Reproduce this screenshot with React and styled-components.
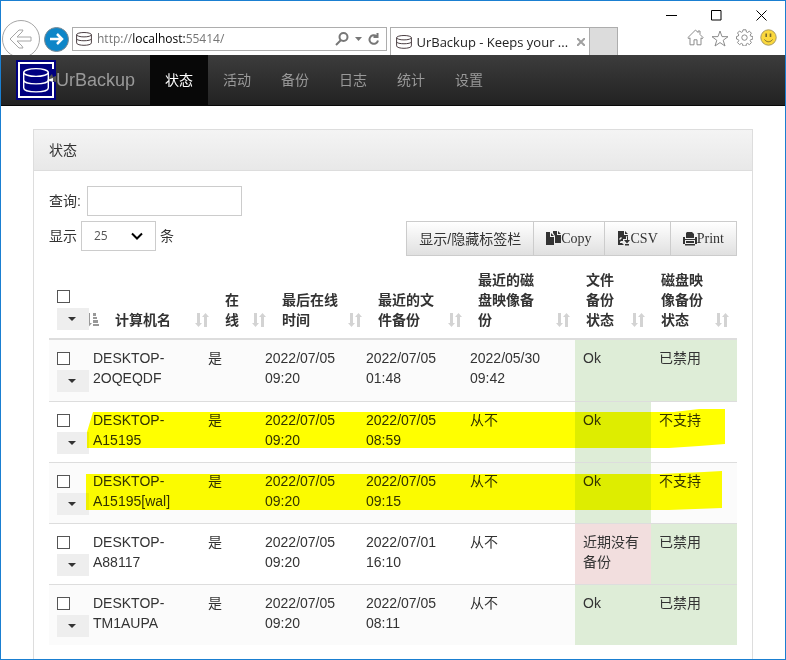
import React from "react";
import styled, { createGlobalStyle, css } from "styled-components";

const sans = '"Liberation Sans", "Noto Sans CJK SC", sans-serif';
const chromeFont = '"Open Sans", "Noto Sans CJK SC", sans-serif';
const serif = '"Liberation Serif", "Noto Sans CJK SC", serif';

const GlobalStyle = createGlobalStyle`
  *, *::before, *::after { box-sizing: border-box; }
  body {
    margin: 0;
    background: #fff;
    color: #333;
    font-family: ${sans};
    font-size: 14px;
    line-height: 20px;
  }
  button, input, select { font: inherit; color: inherit; margin: 0; }
`;

const Window = styled.div`
  display: flex;
  flex-direction: column;
  min-height: 100vh;
  border: 1px solid #1a7fd1;
`;

/* ---------- browser chrome ---------- */

const Chrome = styled.header`
  display: flex;
  align-items: flex-end;
  height: 54px;
  background: #fff;
  font-family: ${chromeFont};
  font-size: 13px;
  overflow: hidden;
`;

const IconButton = styled.button`
  display: flex;
  align-items: center;
  justify-content: center;
  width: ${(p) => p.$size || 16}px;
  height: ${(p) => p.$size || 16}px;
  padding: 0;
  border: 0;
  background: none;
  flex: none;
`;

const History = styled.div`
  display: flex;
  align-items: center;
  gap: 4px;
  height: 38px;
  margin: 0 3px -3px 1px;
`;

const RoundButton = styled(IconButton)`
  border-radius: 50%;
  border: 1px solid ${(p) => (p.$back ? "#a6a6a6" : "#7b8b95")};
  background: ${(p) => (p.$back ? "#fff" : "#0e86c8")};
`;

const AddressBar = styled.form`
  display: flex;
  align-items: center;
  flex: 320 1 0;
  min-width: 0;
  height: 24px;
  margin: 0 3px 4px 0;
  padding: 0 4px 0 3px;
  gap: 4px;
  border: 1px solid #adadad;
  color: #757575;
  font-size: 12px;
`;

const Address = styled.span`
  flex: 1;
  min-width: 0;
  padding-left: 1px;
  white-space: nowrap;
  overflow: hidden;

  b {
    font-weight: 400;
    color: #000;
  }
`;

const Tab = styled.div`
  display: flex;
  align-items: center;
  flex: 199 1 0;
  min-width: 0;
  height: 28px;
  padding: 0 2px 0 5px;
  gap: 4px;
  border: 1px solid #adadad;
  border-bottom: 0;
  color: #222;
`;

const TabTitle = styled.span`
  flex: 1;
  min-width: 0;
  white-space: nowrap;
  overflow: hidden;
`;

const NewTab = styled.button`
  width: 28px;
  height: 28px;
  flex: none;
  padding: 0;
  border: 1px solid #adadad;
  border-width: 1px 1px 0 0;
  background: #dcdcdc;
`;

const ChromeRight = styled.div`
  display: flex;
  flex-direction: column;
  justify-content: space-between;
  align-items: flex-end;
  flex: none;
  height: 54px;
  padding: 6px 8px 8px 45px;
`;

const WindowControls = styled.div`
  display: flex;
  gap: 29px;
  padding-right: 8px;
`;

const Tools = styled.div`
  display: flex;
  gap: 7px;
`;

/* ---------- application ---------- */

const Navbar = styled.nav`
  display: flex;
  height: 51px;
  padding-left: 15px;
  background: linear-gradient(#3c3c3c, #222);
  border-bottom: 1px solid #080808;
`;

const Brand = styled.a`
  display: flex;
  align-items: center;
  width: 134px;
  color: #999;
  font-size: 18px;
  text-decoration: none;
`;

const NavLink = styled.a`
  padding: 15px;
  color: ${(p) => (p.$active ? "#fff" : "#999")};
  background: ${(p) => (p.$active ? "#080808" : "none")};
  text-decoration: none;
`;

const Main = styled.main`
  display: flex;
  flex: 1;
  padding: 23px 32px 0;
`;

const Panel = styled.section`
  flex: 1;
  min-width: 0;
  border: 1px solid #ddd;
  border-bottom: 0;
`;

const PanelTitle = styled.h1`
  margin: 0;
  padding: 10px 15px;
  border-bottom: 1px solid #ddd;
  background: linear-gradient(#f4f4f4, #e8e8e8);
  font-size: 14px;
  font-weight: 400;
`;

const PanelBody = styled.div`
  padding: 15px 15px 12px;
`;

const Field = styled.label`
  display: flex;
  align-items: center;
  height: 30px;
  gap: ${(p) => p.$gap}px;
`;

const SearchInput = styled.input`
  width: 155px;
  height: 30px;
  padding: 4px 8px;
  border: 1px solid #ccc;
  background: #fff;
`;

const Toolbar = styled.div`
  display: flex;
  justify-content: space-between;
  margin: 5px 0 6px;
`;

const SelectBox = styled.span`
  position: relative;
  display: block;

  svg {
    position: absolute;
    top: 11px;
    right: 13px;
    pointer-events: none;
  }
`;

const LengthSelect = styled.select`
  appearance: none;
  width: 75px;
  height: 30px;
  padding: 4px 12px;
  border: 1px solid #ccc;
  border-radius: 0;
  background: #fff;
  color: #555;
  font-family: ${chromeFont};
  font-size: 12px;
`;

const ButtonGroup = styled.div`
  display: flex;
`;

const ToolButton = styled.button`
  display: flex;
  align-items: center;
  height: 35px;
  padding: 0 12px;
  border: 1px solid #ccc;
  background: linear-gradient(#fff, #e0e0e0);
  font-family: ${(p) => (p.$serif ? serif : sans)};

  & + & {
    margin-left: -1px;
  }
`;

const Table = styled.table`
  display: block;
  width: 100%;
`;

const Head = styled.thead`
  display: block;
  border-bottom: 2px solid #ddd;
`;

const Body = styled.tbody`
  display: block;
`;

const HeadRow = styled.tr`
  display: grid;
  grid-template-columns: 58fr 110fr 57fr 96fr 100fr 108fr 75fr 84fr;
`;

const HeadCell = styled.th`
  position: relative;
  display: flex;
  flex-direction: column;
  justify-content: flex-end;
  min-width: 0;
  padding: 8px ${(p) => (p.$selector ? 0 : 31)}px 8px 8px;
  text-align: left;
  font-weight: 700;
`;

const SortIcon = styled.svg`
  position: absolute;
  right: 8px;
  bottom: 11px;
`;

const Row = styled.tr`
  position: relative;
  display: grid;
  grid-template-columns: 36fr 115fr 57fr 101fr 104fr 113fr 76fr 86fr;
  min-height: 61px;

  &:nth-child(odd) {
    background: #fbfbfb;
  }
  & + & td {
    border-top: 1px solid #ddd;
  }
`;

const tones = { ok: "#deedd7", bad: "#f2dede" };

const Cell = styled.td`
  min-width: 0;
  padding: 8px 0 8px 8px;
  ${(p) => p.$narrow && css`padding-right: 20px;`}
  ${(p) => p.$tone && css`background: ${tones[p.$tone]};`}
`;

const Check = styled.input`
  appearance: none;
  display: block;
  width: 13px;
  height: 13px;
  border: 1px solid #555;
  background: #fff;

  ${Cell} &, ${HeadCell} & {
    margin: 4px 0 5px;
  }
  &:checked {
    background: #0e86c8;
  }
`;

const MenuButton = styled.button`
  position: relative;
  z-index: 1;
  display: flex;
  align-items: center;
  justify-content: center;
  width: 32px;
  height: 22px;
  padding: 0 2px 0 0;
  border: 0;
  background: #eee;
`;

const Marker = styled.svg`
  position: absolute;
  z-index: 2;
  left: 0;
  top: 0;
  width: 100%;
  height: 100%;
  mix-blend-mode: multiply;
  pointer-events: none;
`;

/* ---------- drawings ---------- */

const Disks = () => (
  <svg width="16" height="14" viewBox="0 0 16 14" fill="none" stroke="#4b3f43" aria-hidden="true">
    <ellipse cx="8" cy="2.7" rx="7.4" ry="2.2" />
    <path d="M.6 2.7v8.2c0 3.2 14.8 3.2 14.8 0V2.7M.6 6.8c0 2.6 14.8 2.6 14.8 0" />
  </svg>
);

const Logo = () => (
  <svg width="40" height="40" viewBox="0 0 40 40" fill="none" aria-hidden="true">
    <path fill="#000080" d="M0 0h40v40H0z" />
    <path stroke="#fff" strokeWidth="2" d="M37 9V3H3v34h34V22" />
    <g stroke="#fff" strokeWidth="1.4">
      <ellipse cx="20" cy="12.500" rx="12.300" ry="3.900" />
      <path d="M7.700 12.500v15.500c0 5.200 24.600 5.200 24.600 0V12.500M7.700 20c0 5.200 24.600 5.200 24.600 0" />
    </g>
    <path fill="#555" d="m33 17 3-3 1 3 3-1v6l-4-1-3 1z" />
    <path fill="#fff" d="m31 20 6-2v4z" />
  </svg>
);

const SortBoth = () => (
  <SortIcon width="14" height="14" viewBox="0 0 14 14" fill="#d3d3d3" aria-hidden="true">
    <path d="M2 0h3v10h2l-3.500 4L0 10h2zM9 14h3V4h2l-3.500-4L7 4h2z" />
  </SortIcon>
);

const SortAsc = () => (
  <SortIcon width="14" height="14" viewBox="0 0 14 14" fill="#999" aria-hidden="true">
    <path d="M2 0h3v10h2l-3.500 4L0 10h2zM8 0h3v3H8zM8 4h4v2H8zM8 7h5v3H8zM8 11h6v2H8z" />
  </SortIcon>
);

const Caret = () => (
  <svg width="8" height="4" viewBox="0 0 8 4" fill="#333" aria-hidden="true">
    <path d="M0 0h8L4 4z" />
  </svg>
);

const CopyIcon = () => (
  <svg width="15" height="15" viewBox="0 0 15 15" fill="#333" aria-hidden="true">
    <path d="M0 1h4v5h4v8H0zM5 2l3 3H5zM7 0h4v4h4v8H9V5L7 2zM12 0l3 3h-3z" />
  </svg>
);

const CsvIcon = () => (
  <svg width="14" height="15" viewBox="0 0 14 15" fill="#333" aria-hidden="true">
    <path d="M1 0h6v4h4v2L9 5v3H6v2H3l4 4H1zM8 0l3 3H8zM7 9h3V6h1v3h2l-3 3.500zM8 13h4v1.500H8z" />
    <path fill="#f2f2f2" d="m2 8 2-2 1 1-2 2zM3 11h2v1H3z" />
  </svg>
);

const PrintIcon = () => (
  <svg width="14" height="14" viewBox="0 0 14 14" fill="#333" aria-hidden="true">
    <path d="M4 0h5l2 2v4H3V1zM0 5h2v2h10V5h2v7h-2V8H2v4H0zM3 9h8v2H3zM2 12h10v1.500H2z" />
  </svg>
);

const Smiley = () => (
  <svg width="17" height="17" viewBox="0 0 17 17" aria-hidden="true">
    <circle cx="8.500" cy="8.500" r="7.700" fill="#fbd83c" stroke="#a89a62" />
    <path d="M6.200 4.500v3.500M10.500 4.500v3.500" stroke="#7a6a2c" strokeWidth="1.600" />
    <path d="M4.500 10.500c2 3 6 3 8 0" fill="none" stroke="#7a6a2c" />
  </svg>
);

const Gear = () => (
  <svg width="17" height="17" viewBox="0 0 17 17" fill="none" stroke="#8c8c8c" aria-hidden="true">
    <path d="M7 .8h3l.4 2.200 1.100.5 1.900-1.300 2 2-1.200 1.900.5 1.100 2.100.3v2.600l-2.100.5-.5 1.100 1.200 1.900-2 2-1.900-1.200-1.100.5-.4 2.100H7l-.5-2.100-1.100-.5-1.900 1.200-2-2 1.300-1.900-.5-1.100L.5 10V7.500L2.300 7l.5-1.100L1.500 4l2-2 1.900 1.300 1.100-.5z" />
    <circle cx="8.500" cy="8.600" r="2.700" />
  </svg>
);

const markers = {
  upper: "44,11 38,31 38,47 620,47 650,45 676,43 676,8 650,8 625,11",
  lower: "37,12 37,48 620,48 673,46 673,9 655,10 612,12",
};

const navigation = ["状态", "活动", "备份", "日志", "统计", "设置"];
const headings = ["计算机名", "在线", "最后在线时间", "最近的文件备份", "最近的磁盘映像备份", "文件备份状态", "磁盘映像备份状态"];

const clients = [
  { name: "DESKTOP-2OQEQDF", file: "2022/07/05 01:48", image: "2022/05/30 09:42", status: "Ok", tone: "ok", disk: "已禁用", diskTone: "ok" },
  { name: "DESKTOP-A15195", file: "2022/07/05 08:59", image: "从不", status: "Ok", tone: "ok", disk: "不支持", marker: "upper" },
  { name: "DESKTOP-A15195[wal]", file: "2022/07/05 09:15", image: "从不", status: "Ok", tone: "ok", disk: "不支持", marker: "lower" },
  { name: "DESKTOP-A88117", file: "2022/07/01 16:10", image: "从不", status: "近期没有备份", tone: "bad", disk: "已禁用", diskTone: "ok" },
  { name: "DESKTOP-TM1AUPA", file: "2022/07/05 08:11", image: "从不", status: "Ok", tone: "ok", disk: "已禁用", diskTone: "ok" },
];

function BrowserChrome() {
  return (
    <Chrome>
      <History>
        <RoundButton $back $size={38} aria-label="后退">
          <svg width="24" height="22" viewBox="0 0 24 22" fill="none" stroke="#a6a6a6">
            <path strokeLinejoin="round" d="m1 11 9-9h4l-1 2-5 5h14v4H8l5 5 1 2h-4z" />
          </svg>
        </RoundButton>
        <RoundButton $size={25} aria-label="前进">
          <svg width="14" height="12" viewBox="0 0 14 12" fill="none" stroke="#fff" strokeWidth="2.500">
            <path d="M0 6h12M7 1l5 5-5 5" />
          </svg>
        </RoundButton>
      </History>
      <AddressBar>
        <Disks />
        <Address>http://<b>localhost:</b>55414/</Address>
        <IconButton type="button" aria-label="搜索">
          <svg width="14" height="14" viewBox="0 0 14 14" fill="none" stroke="#777" strokeWidth="2">
            <circle cx="8.500" cy="5" r="4" />
            <path d="m6 8-5 5" />
          </svg>
        </IconButton>
        <IconButton type="button" $size={8} aria-label="展开">
          <svg width="7" height="4" viewBox="0 0 7 4" fill="#777"><path d="M0 0h7L3.500 4z" /></svg>
        </IconButton>
        <IconButton type="button" aria-label="刷新">
          <svg width="12" height="13" viewBox="0 0 12 13" fill="none" stroke="#777" strokeWidth="2">
            <path d="M8.500 3.200A4.300 4.300 0 1 0 10 7.500M5.500 4h4V0" />
          </svg>
        </IconButton>
      </AddressBar>
      <Tab>
        <Disks />
        <TabTitle>UrBackup - Keeps your ...</TabTitle>
        <IconButton $size={12} aria-label="关闭标签页">
          <svg width="8" height="8" viewBox="0 0 8 8" stroke="#a0a0a0" strokeWidth="2"><path d="m0 0 8 8M8 0 0 8" /></svg>
        </IconButton>
      </Tab>
      <NewTab aria-label="新标签页" />
      <ChromeRight>
        <WindowControls>
          <IconButton aria-label="最小化">
            <svg width="11" height="11" viewBox="0 0 11 11" stroke="#000"><path d="M0 5.500h11" /></svg>
          </IconButton>
          <IconButton aria-label="最大化">
            <svg width="11" height="11" viewBox="0 0 11 11" fill="none" stroke="#000"><path d="M.5.5h9.500v9.500H.5z" /></svg>
          </IconButton>
          <IconButton aria-label="关闭">
            <svg width="11" height="11" viewBox="0 0 11 11" stroke="#000"><path d="m.5.5 10 10M10.500.5l-10 10" /></svg>
          </IconButton>
        </WindowControls>
        <Tools>
          <IconButton $size={17} aria-label="主页">
            <svg width="17" height="17" viewBox="0 0 17 17" fill="none" stroke="#8c8c8c">
              <path d="M8.500 1 .8 8.700l1.200 1 1-.9v7h4v-5h3v5h4v-7l1 .9 1.200-1L13 5.500V2h-2v1.500z" />
            </svg>
          </IconButton>
          <IconButton $size={18} aria-label="收藏夹">
            <svg width="18" height="17" viewBox="0 0 18 17" fill="none" stroke="#8c8c8c">
              <path d="m9 1 2 5.600 6 .1-4.800 3.600 1.800 5.700-5-3.400L4 16l1.800-5.700L1 6.700l6-.1z" />
            </svg>
          </IconButton>
          <IconButton $size={17} aria-label="工具"><Gear /></IconButton>
          <IconButton $size={17} aria-label="反馈"><Smiley /></IconButton>
        </Tools>
      </ChromeRight>
    </Chrome>
  );
}

function Selector({ label }) {
  return (
    <>
      <Check type="checkbox" aria-label={label} />
      <MenuButton aria-label={`${label} 操作`}><Caret /></MenuButton>
    </>
  );
}

function ClientRow({ client }) {
  return (
    <Row>
      <Cell><Selector label={client.name} /></Cell>
      <Cell $narrow>{client.name}</Cell>
      <Cell>是</Cell>
      <Cell $narrow>2022/07/05 09:20</Cell>
      <Cell $narrow>{client.file}</Cell>
      <Cell $narrow>{client.image}</Cell>
      <Cell $tone={client.tone}>{client.status}</Cell>
      <Cell $tone={client.diskTone}>
        {client.disk}
        {client.marker && (
          <Marker viewBox="0 0 688 61" preserveAspectRatio="none" aria-hidden="true">
            <polygon fill="#ff0" points={markers[client.marker]} />
          </Marker>
        )}
      </Cell>
    </Row>
  );
}

export default function App() {
  return (
    <>
      <GlobalStyle />
      <Window>
        <BrowserChrome />
        <Navbar>
          <Brand href="#home"><Logo />UrBackup</Brand>
          {navigation.map((item, i) => (
            <NavLink key={item} href={`#${item}`} $active={i === 0}>{item}</NavLink>
          ))}
        </Navbar>
        <Main>
          <Panel>
            <PanelTitle>状态</PanelTitle>
            <PanelBody>
              <Field $gap={6}>查询: <SearchInput type="search" /></Field>
              <Toolbar>
                <Field $gap={4}>
                  显示
                  <SelectBox>
                    <LengthSelect defaultValue="25">
                      <option>10</option>
                      <option>25</option>
                      <option>50</option>
                    </LengthSelect>
                    <svg width="12" height="9" viewBox="0 0 12 9" fill="none" stroke="#000" strokeWidth="2">
                      <path d="m1 1.500 5 5 5-5" />
                    </svg>
                  </SelectBox>
                  条
                </Field>
                <ButtonGroup>
                  <ToolButton>显示/隐藏标签栏</ToolButton>
                  <ToolButton $serif><CopyIcon />Copy</ToolButton>
                  <ToolButton $serif><CsvIcon />CSV</ToolButton>
                  <ToolButton $serif><PrintIcon />Print</ToolButton>
                </ButtonGroup>
              </Toolbar>
              <Table>
                <Head>
                  <HeadRow>
                    <HeadCell $selector><SortAsc /><Selector label="全选" /></HeadCell>
                    {headings.map((heading) => (
                      <HeadCell key={heading}>{heading}<SortBoth /></HeadCell>
                    ))}
                  </HeadRow>
                </Head>
                <Body>
                  {clients.map((client) => <ClientRow key={client.name} client={client} />)}
                </Body>
              </Table>
            </PanelBody>
          </Panel>
        </Main>
      </Window>
    </>
  );
}
